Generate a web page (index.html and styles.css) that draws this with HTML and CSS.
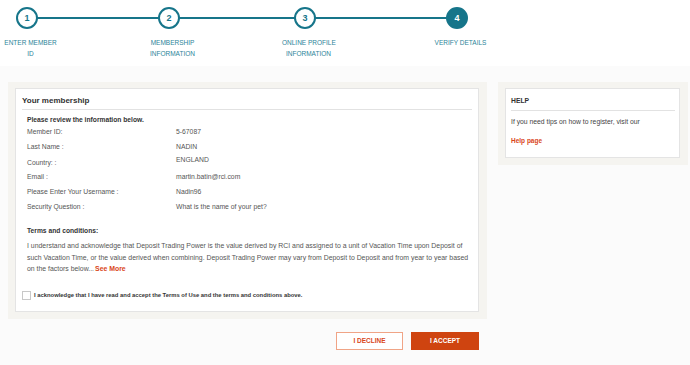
FILE: index.html
```html
<!DOCTYPE html>
<html lang="en">
<head>
    <meta charset="UTF-8">
    <meta name="viewport" content="width=device-width, initial-scale=1.0">
    <title>Verify details</title>
    <link rel="stylesheet" href="styles.css">
</head>
<body>
    <header class="stepper">
        <div class="steps">
            <div class="circle c1">1</div>
            <div class="line l1"></div>
            <div class="circle c2">2</div>
            <div class="line l2"></div>
            <div class="circle c3">3</div>
            <div class="line l3"></div>
            <div class="circle c4 active">4</div>
            <div class="label c1">ENTER MEMBER<br>ID</div>
            <div class="label c2">MEMBERSHIP<br>INFORMATION</div>
            <div class="label c3">ONLINE PROFILE<br>INFORMATION</div>
            <div class="label c4">VERIFY DETAILS</div>
        </div>
    </header>

    <div class="page">
        <div class="columns">
            <div class="main">
                <div class="panel">
                    <div class="card">
                        <h3 class="card-title">Your membership</h3>
                        <p class="strong">Please review the information below.</p>
                        <div class="info">
                            <span>Member ID:</span><span>5-67087</span>
                            <span>Last Name :</span><span>NADIN</span>
                            <span class="low">Country: :</span><span class="high">ENGLAND</span>
                            <span>Email :</span><span>martin.batin@rci.com</span>
                            <span>Please Enter Your Username :</span><span>Nadin96</span>
                            <span>Security Question :</span><span>What is the name of your pet?</span>
                        </div>
                        <p class="strong terms-title">Terms and conditions:</p>
                        <p class="terms">I understand and acknowledge that Deposit Trading Power is the value derived by RCI and assigned to a unit of Vacation Time upon Deposit of such Vacation Time, or the value derived when combining. Deposit Trading Power may vary from Deposit to Deposit and from year to year based on the factors below...<a href="#" class="more">See More</a></p>
                        <label class="ack">
                            <span class="box"></span>
                            <span>I acknowledge that I have read and accept the Terms of Use and the terms and conditions above.</span>
                        </label>
                    </div>
                </div>
                <div class="actions">
                    <button class="btn decline">I DECLINE</button>
                    <button class="btn accept">I ACCEPT</button>
                </div>
            </div>

            <div class="panel side">
                <div class="card help">
                    <h3 class="help-title">HELP</h3>
                    <p>If you need tips on how to register, visit our</p>
                    <a href="#" class="help-link">Help page</a>
                </div>
            </div>
        </div>
    </div>
</body>
</html>
```

FILE: styles.css
```css
* {
    margin: 0;
    padding: 0;
    box-sizing: border-box;
}
body {
    font-family: "Liberation Sans", Arial, sans-serif;
    color: #555;
    background-color: #fbfbfb;
}

/* stepper */
.stepper {
    height: 66px;
    background-color: #fff;
    padding-top: 7px;
}
.steps {
    display: grid;
    grid-template-columns: 60px 82px 60px 76px 60px 92px 60px;
    grid-template-rows: 22px auto;
    margin-left: -3px;
}
.circle {
    grid-row: 1;
    justify-self: center;
    width: 22px;
    height: 22px;
    border: 2px solid #16758a;
    border-radius: 50%;
    background-color: #fff;
    color: #16758a;
    font-size: 9px;
    font-weight: bold;
    line-height: 18px;
    text-align: center;
    position: relative;
    z-index: 1;
}
.circle.active {
    background-color: #16758a;
    color: #fff;
}
.line {
    grid-row: 1;
    align-self: center;
    height: 2px;
    background-color: #16758a;
    margin: 0 -20px;
}
.c1 { grid-column: 1; }
.l1 { grid-column: 2; }
.c2 { grid-column: 3; }
.l2 { grid-column: 4; }
.c3 { grid-column: 5; }
.l3 { grid-column: 6; }
.c4 { grid-column: 7; }
.label {
    grid-row: 2;
    margin-top: 9px;
    padding-left: 7px;
    text-align: center;
    font-size: 6.5px;
    line-height: 10.5px;
    color: #2c8499;
    white-space: nowrap;
}

/* content */
.page {
    padding: 16px 2px 0 8px;
}
.columns {
    display: flex;
    align-items: flex-start;
    gap: 11px;
}
.main {
    width: 479px;
}
.panel {
    background-color: #f5f4f0;
    padding: 6px 8px 7px 7px;
}
.card {
    background-color: #fff;
    border: 1px solid #e4e4e4;
    padding: 7px 6px 11px 6px;
}
.card-title {
    font-size: 8px;
    font-weight: bold;
    color: #333;
    line-height: 10px;
    padding-bottom: 3px;
    border-bottom: 1px solid #e2e2e2;
}
.strong {
    font-weight: bold;
    color: #333;
    font-size: 6.7px;
    line-height: 10px;
    padding-left: 5px;
}
.card-title + .strong {
    margin-top: 5px;
}
.info {
    display: grid;
    grid-template-columns: 149px auto;
    grid-auto-rows: 15px;
    padding-left: 5px;
    font-size: 6.8px;
    line-height: 10px;
    padding-top: 2px;
}
.info .low {
    padding-top: 1px;
}
.info .high {
    margin-top: -2px;
}
.terms-title {
    margin-top: 9px;
}
.terms {
    margin-top: 4px;
    padding-left: 5px;
    font-size: 6.9px;
    line-height: 11.5px;
}
.more {
    margin-left: 1px;
    color: #d9461a;
    font-weight: bold;
    text-decoration: none;
}
.ack {
    display: flex;
    align-items: center;
    gap: 3px;
    margin-top: 16px;
    font-size: 5.85px;
    font-weight: bold;
    color: #333;
}
.box {
    width: 9px;
    height: 9px;
    border: 1px solid #c8c8c8;
    background-color: #fff;
}
.actions {
    display: flex;
    justify-content: flex-end;
    gap: 8px;
    margin-top: 13px;
    padding-right: 8px;
}
.btn {
    width: 67px;
    height: 18px;
    font-family: "Liberation Sans", Arial, sans-serif;
    font-size: 6.5px;
    font-weight: bold;
    cursor: pointer;
}
.decline {
    background-color: #fff;
    color: #d9461a;
    border: 1px solid #f0a486;
}
.accept {
    width: 68px;
    background-color: #cf4410;
    color: #fff;
    border: 1px solid #cf4410;
}

/* help */
.side {
    width: 190px;
}
.help {
    padding: 7px 4px 12px 5px;
    height: 70px;
}
.help-title {
    font-size: 6.8px;
    font-weight: bold;
    color: #333;
    line-height: 10px;
    padding-bottom: 4px;
    border-bottom: 1px solid #e2e2e2;
}
.help p {
    margin-top: 6px;
    font-size: 6.8px;
    line-height: 10px;
    color: #444;
}
.help-link {
    display: block;
    margin-top: 9px;
    font-size: 6.5px;
    font-weight: bold;
    color: #d9461a;
    text-decoration: none;
    line-height: 10px;
}
```
